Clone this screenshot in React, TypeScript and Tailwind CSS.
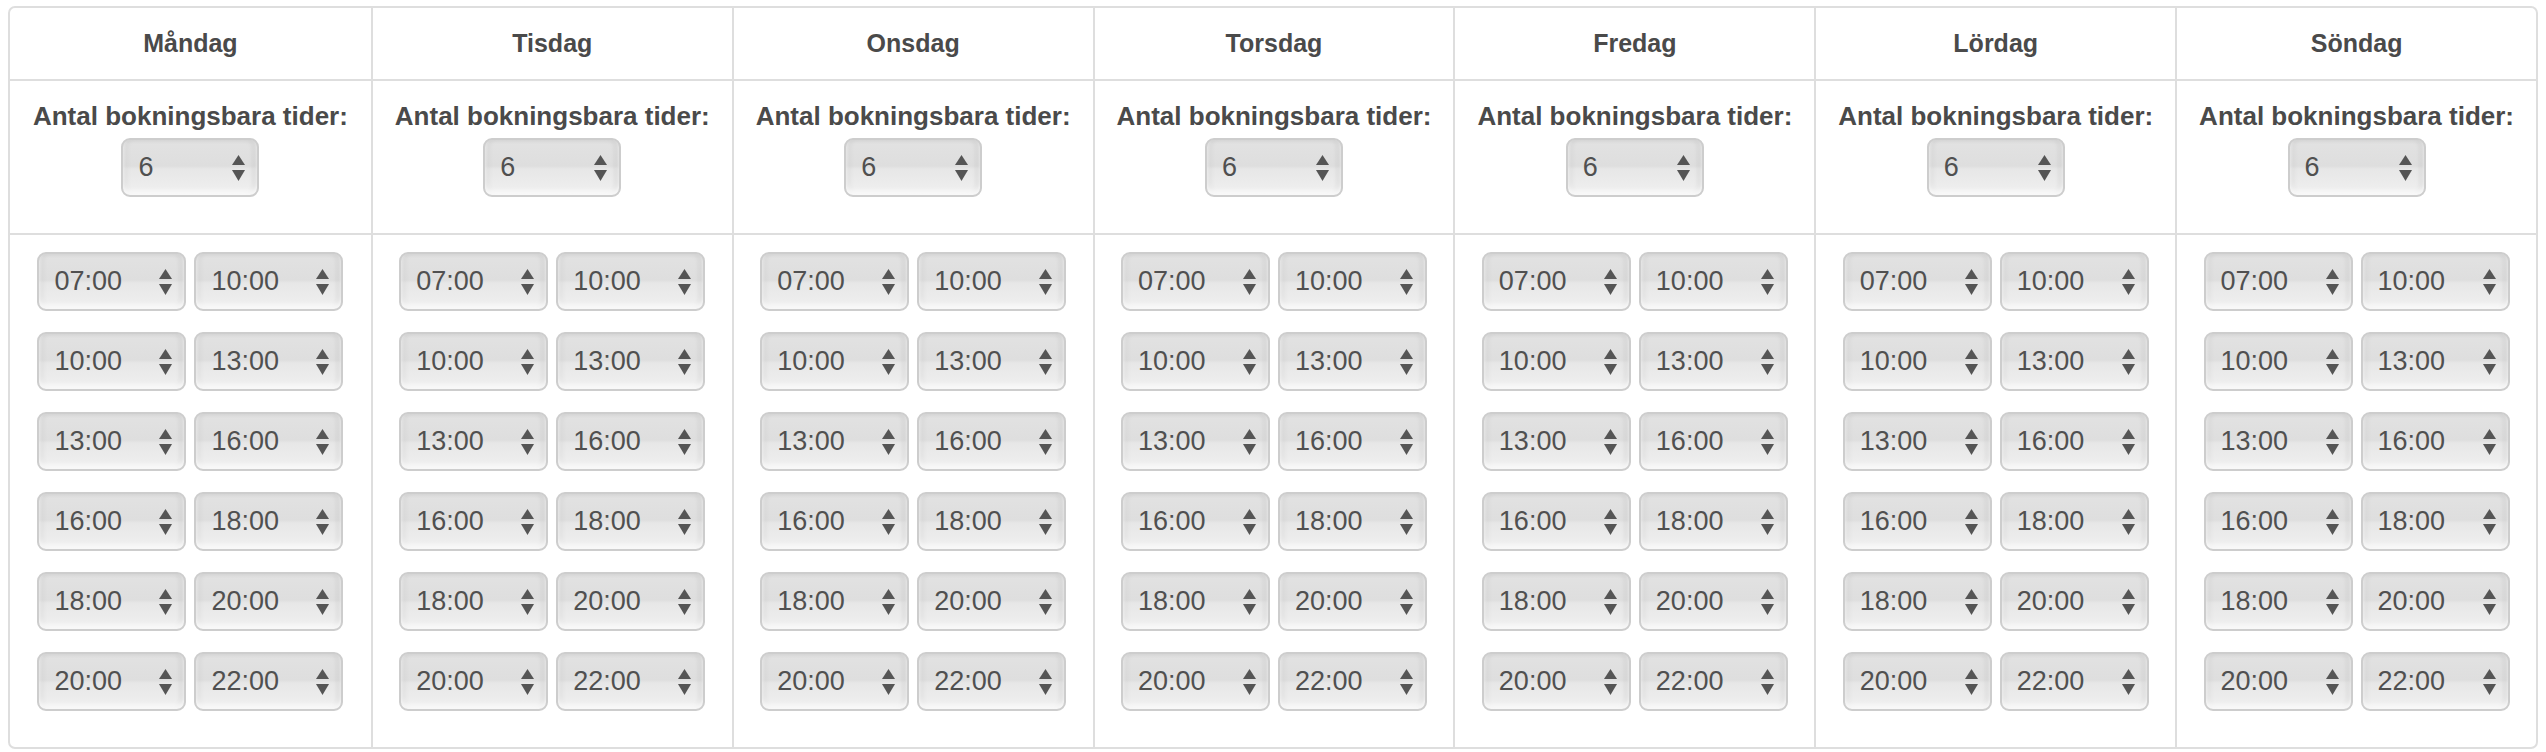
import React from "react";

const days = ["Måndag", "Tisdag", "Onsdag", "Torsdag", "Fredag", "Lördag", "Söndag"];
const times: [string, string][] = [
  ["07:00", "10:00"],
  ["10:00", "13:00"],
  ["13:00", "16:00"],
  ["16:00", "18:00"],
  ["18:00", "20:00"],
  ["20:00", "22:00"],
];

function Arrows() {
  return (
    <svg width="13" height="26" viewBox="0 0 13 26" className="shrink-0">
      <polygon points="6.5,0 13,10 0,10" fill="#555555" />
      <polygon points="0,15 13,15 6.5,26" fill="#555555" />
    </svg>
  );
}

function Select({ value, width }: { value: string; width: string }) {
  return (
    <div
      className={`${width} h-[59px] flex items-center justify-between pl-[15px] pr-[12px] rounded-[9px] border-2 border-[#cdcdcd] bg-[linear-gradient(to_bottom,#e2e2e2_0%,#dedede_47%,#e7e7e7_53%,#f0f0f0_100%)] shadow-[inset_0_-4px_5px_rgba(255,255,255,0.8),inset_4px_0_5px_rgba(0,0,0,0.05),inset_-4px_0_5px_rgba(0,0,0,0.07)] text-[27px] leading-none text-[#505050]`}
    >
      <span>{value}</span>
      <Arrows />
    </div>
  );
}

export default function App() {
  return (
    <div
      className="bg-white w-[2546px] h-[752px] pt-[6px] px-[8px]"
      style={{ fontFamily: '"Liberation Sans", Arial, Helvetica, sans-serif' }}
    >
      <div className="grid grid-cols-7 border-2 border-[#dedede] rounded-[7px] overflow-hidden">
        {days.map((d, i) => (
          <div key={d} className={`flex flex-col ${i > 0 ? "border-l-2 border-[#dedede]" : ""}`}>
            <div className="h-[73px] flex items-center justify-center border-b-2 border-[#dedede] font-bold text-[25px] text-[#4a4a4a]">
              {d}
            </div>
            <div className="h-[154px] border-b-2 border-[#dedede] flex flex-col items-center pt-[20px]">
              <div className="font-bold text-[26px] leading-[30px] text-[#4a4a4a] whitespace-nowrap">
                Antal bokningsbara tider:
              </div>
              <div className="mt-[7px]">
                <Select value="6" width="w-[138px]" />
              </div>
            </div>
            <div className="h-[512px] flex flex-col items-center pt-[17px] gap-[21px]">
              {times.map(([a, b], j) => (
                <div key={j} className="flex gap-[8px]">
                  <Select value={a} width="w-[149px]" />
                  <Select value={b} width="w-[149px]" />
                </div>
              ))}
            </div>
          </div>
        ))}
      </div>
    </div>
  );
}
